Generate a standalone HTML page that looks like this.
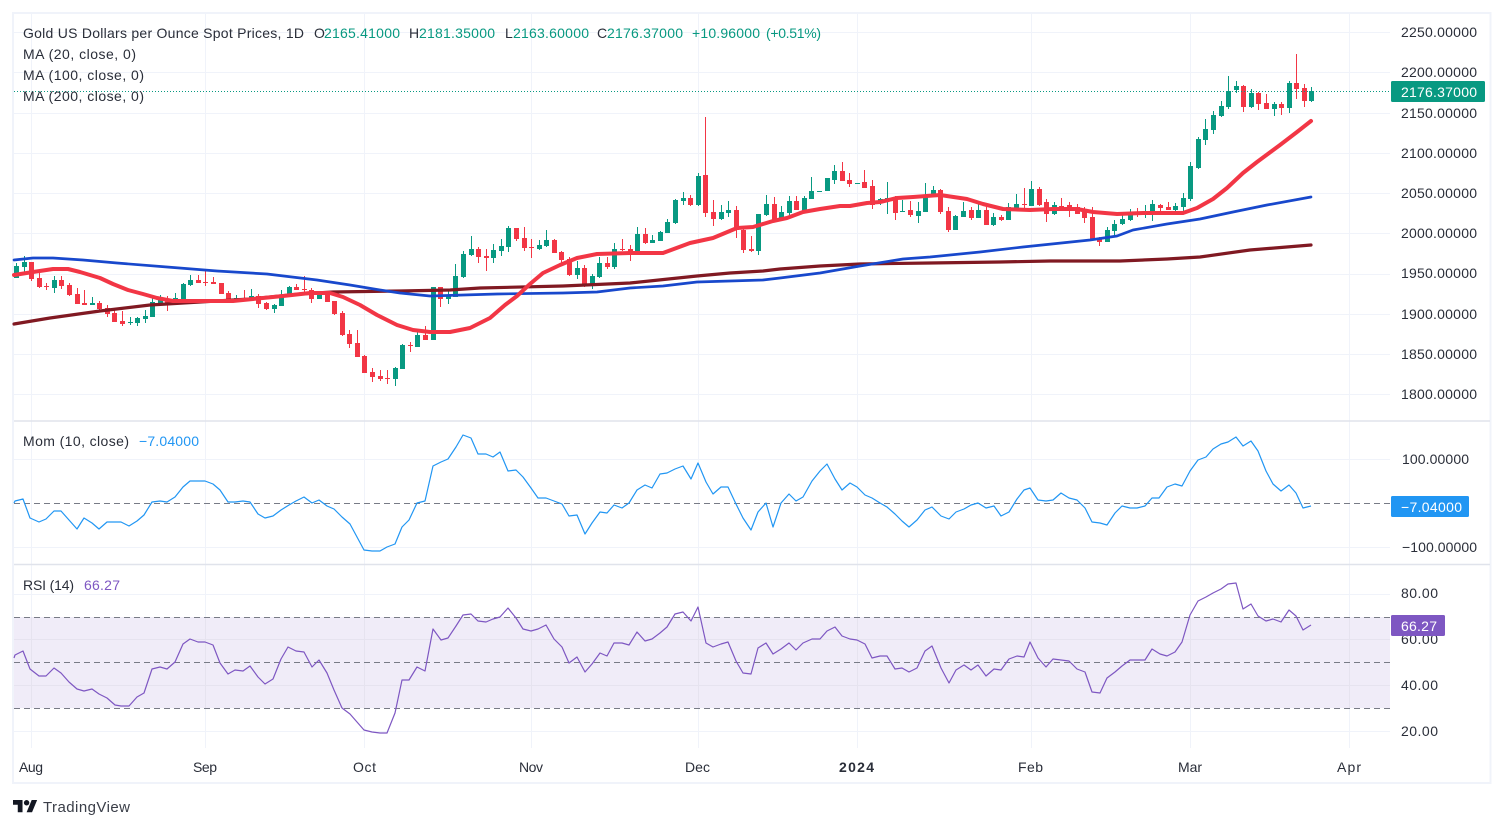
<!DOCTYPE html>
<html lang="en">
<head>
<meta charset="utf-8">
<title>Gold US Dollars per Ounce Spot Prices</title>
<style>
html,body{margin:0;padding:0;background:#fff;width:1504px;height:828px;overflow:hidden}
svg{display:block}
text{font-family:"Liberation Sans","DejaVu Sans",sans-serif;font-size:14px;fill:#2a2e39}
.t{fill:#089981}
.w{fill:#fff}
</style>
</head>
<body>
<svg width="1504" height="828" viewBox="0 0 1504 828" xmlns="http://www.w3.org/2000/svg">
<rect width="1504" height="828" fill="#fff"/>
<!-- RSI band -->
<rect x="14" y="617" width="1376" height="91" fill="#f0ecf8"/>
<!-- grid -->
<g stroke="#f0f3fa" stroke-width="1" fill="none" shape-rendering="crispEdges">
<path d="M14 32.5H1390M14 72.5H1390M14 113.5H1390M14 153.5H1390M14 193.5H1390M14 233.5H1390M14 274.5H1390M14 314.5H1390M14 354.5H1390M14 394.5H1390"/>
<path d="M14 459.5H1390M14 547.5H1390"/>
<path d="M14 594.5H1390M14 731.5H1390"/>
<path d="M31.5 14V748M205.5 14V748M364.5 14V748M531.5 14V748M698.5 14V748M857.5 14V748M1031.5 14V748M1190.5 14V748M1349.5 14V748"/>
</g>
<g stroke="#e6e3ef" stroke-width="1" fill="none" shape-rendering="crispEdges">
<path d="M14 639.5H1390M14 685.5H1390"/>
<path d="M31.5 617V708M205.5 617V708M364.5 617V708M531.5 617V708M698.5 617V708M857.5 617V708M1031.5 617V708M1190.5 617V708M1349.5 617V708"/>
</g>
<!-- frame -->
<rect x="13" y="13" width="1477.5" height="770" fill="none" stroke="#f0f3fa" stroke-width="2"/>
<path d="M14 421H1490M14 564.5H1490" stroke="#e0e3eb" stroke-width="1.5" fill="none"/>
<!-- green candles -->
<path shape-rendering="crispEdges" fill="none" stroke="#089981" stroke-width="1" d="M16.5 263V278M24.5 256V273M54.5 276V293M92.5 297V305M130.5 317V325M137.5 317V326M145.5 310V323M152.5 298V317M160.5 295V305M175.5 293V303M183.5 283V301M190.5 275V286M236.5 295V302M251.5 289V301M274.5 304V313M281.5 290V306M289.5 286V296M319.5 291V299M395.5 367V386M402.5 344V369M417.5 332V347M433.5 287V340M448.5 289V304M455.5 264V297M463.5 251V278M471.5 236V256M493.5 244V263M501.5 239V256M508.5 226V252M539.5 240V250M546.5 230V247M577.5 261V279M592.5 274V289M599.5 257V278M614.5 243V269M637.5 227V254M652.5 235V243M660.5 231V241M667.5 219V233M675.5 199V224M683.5 192V205M698.5 173V206M721.5 205V220M728.5 201V217M758.5 214V255M766.5 195V216M781.5 206V220M789.5 196V215M804.5 196V212M811.5 177V199M827.5 178V191M834.5 165V184M880.5 198V205M887.5 182V214M902.5 200V212M918.5 202V223M925.5 183V212M933.5 186V196M955.5 215V230M963.5 202V217M978.5 204V218M993.5 213V226M1008.5 203V220M1016.5 194V210M1031.5 181V206M1054.5 202V215M1107.5 227V242M1114.5 220V235M1122.5 215V225M1130.5 209V221M1145.5 205V218M1152.5 200V221M1175.5 203V214M1183.5 193V211M1190.5 162V201M1198.5 137V169M1205.5 119V145M1213.5 111V134M1221.5 101V117M1228.5 76V109M1236.5 81V93M1251.5 89V108M1274.5 102V116M1289.5 81V113M1311.5 87V102"/>
<path shape-rendering="crispEdges" fill="none" stroke="#089981" stroke-width="5" d="M16.5 266V278M24.5 262V267M54.5 280V288M92.5 303V305M130.5 322V323M137.5 318V323M145.5 316V319M152.5 302V317M160.5 299V303M175.5 298V303M183.5 284V299M190.5 280V285M236.5 298V302M251.5 296V300M274.5 305V309M281.5 295V306M289.5 287V296M319.5 294V299M395.5 368V379M402.5 345V369M417.5 335V347M433.5 287V340M448.5 295V299M455.5 276V297M463.5 254V277M471.5 249V255M493.5 250V258M501.5 246V251M508.5 228V247M539.5 245V249M546.5 240V246M577.5 268V275M592.5 276V284M599.5 263V277M614.5 249V267M637.5 234V252M652.5 240V243M660.5 232V241M667.5 222V233M675.5 200V223M683.5 198V201M698.5 176V205M721.5 212V219M728.5 210V213M758.5 214V251M766.5 204V215M781.5 212V219M789.5 201V213M804.5 198V211M811.5 191V199M819.5 191V192M827.5 178V191M834.5 171V180M857.5 183V184M880.5 199V202M887.5 198V199M902.5 211V212M918.5 211V216M925.5 195V212M933.5 190V195M955.5 216V230M963.5 211V217M978.5 210V218M993.5 217V225M1008.5 207V220M1016.5 204V209M1031.5 189V206M1054.5 205V214M1107.5 230V242M1114.5 224V231M1122.5 219V224M1130.5 213V220M1145.5 214V215M1152.5 204V215M1175.5 206V210M1183.5 198V207M1190.5 166V199M1198.5 139V168M1205.5 129V140M1213.5 115V130M1221.5 106V116M1228.5 91V107M1236.5 86V90M1251.5 93V107M1274.5 104V109M1289.5 83V108M1311.5 91V101"/>
<!-- red candles -->
<path shape-rendering="crispEdges" fill="none" stroke="#f23645" stroke-width="1" d="M31.5 262V281M39.5 273V288M46.5 283V290M61.5 276V289M69.5 283V296M77.5 288V304M84.5 290V305M99.5 301V312M107.5 305V317M114.5 308V322M122.5 311V326M167.5 296V311M198.5 275V283M205.5 271V286M213.5 277V284M221.5 283V294M228.5 291V301M244.5 290V300M258.5 294V308M266.5 302V310M296.5 284V290M304.5 276V292M311.5 288V303M327.5 292V302M334.5 301V315M342.5 311V336M349.5 330V348M357.5 330V357M364.5 355V373M372.5 368V382M380.5 370V381M387.5 370V384M410.5 342V352M425.5 326V340M440.5 287V307M478.5 247V263M486.5 249V271M516.5 228V241M524.5 227V251M531.5 239V258M554.5 239V253M561.5 251V264M569.5 257V276M584.5 265V287M607.5 257V269M622.5 239V251M630.5 245V261M645.5 228V244M690.5 195V206M705.5 117V217M713.5 200V226M736.5 206V238M743.5 229V253M751.5 236V252M774.5 197V222M796.5 196V210M842.5 162V181M849.5 173V187M864.5 170V188M872.5 180V209M895.5 196V220M910.5 201V217M940.5 189V214M948.5 207V232M971.5 207V220M986.5 207V225M1001.5 215V221M1024.5 188V209M1039.5 187V206M1046.5 199V222M1061.5 198V210M1069.5 202V217M1077.5 204V214M1084.5 207V223M1092.5 207V241M1099.5 237V246M1137.5 208V217M1160.5 204V212M1168.5 202V210M1243.5 85V112M1258.5 92V110M1266.5 94V109M1281.5 102V115M1296.5 54V99M1304.5 84V107"/>
<path shape-rendering="crispEdges" fill="none" stroke="#f23645" stroke-width="5" d="M31.5 262V279M39.5 278V287M46.5 286V287M61.5 280V286M69.5 285V295M77.5 294V304M84.5 303V305M99.5 303V309M107.5 308V314M114.5 313V322M122.5 321V324M167.5 299V303M198.5 280V283M205.5 282V283M213.5 282V284M221.5 283V294M228.5 293V300M244.5 298V299M258.5 296V304M266.5 303V309M296.5 287V290M304.5 289V290M311.5 290V299M327.5 292V302M334.5 301V314M342.5 313V335M349.5 334V344M357.5 343V357M364.5 356V373M372.5 372V377M380.5 376V379M387.5 378V379M410.5 345V346M425.5 335V340M440.5 287V299M478.5 249V257M486.5 256V258M516.5 228V239M524.5 238V248M531.5 247V248M554.5 240V253M561.5 252V260M569.5 259V275M584.5 268V286M607.5 263V267M622.5 249V250M630.5 249V252M645.5 234V243M690.5 198V205M705.5 175V213M713.5 212V219M736.5 210V230M743.5 230V250M751.5 249V251M774.5 204V220M796.5 201V210M842.5 171V181M849.5 180V184M864.5 182V188M872.5 186V205M895.5 197V213M910.5 210V215M940.5 190V212M948.5 211V230M971.5 210V218M986.5 210V225M1001.5 217V220M1024.5 204V205M1039.5 189V205M1046.5 202V214M1061.5 206V207M1069.5 205V210M1077.5 207V214M1084.5 212V218M1092.5 217V240M1099.5 239V242M1137.5 213V214M1160.5 205V208M1168.5 207V210M1243.5 86V107M1258.5 93V104M1266.5 103V109M1281.5 104V108M1296.5 83V89M1304.5 88V101"/>
<!-- MA 200 -->
<polyline fill="none" stroke="#801922" stroke-width="3.2" stroke-linejoin="round" stroke-linecap="round" points="14,324 50,318 100,311 150,305 200,302 250,299 300,294 333,292 400,291 450,290 480,288 563,286 630,283 697,276 730,273 763,271 780,269 820,266 860,264 930,263 1000,262 1050,261 1120,261 1167,259 1200,257 1250,250 1311,245"/>
<!-- MA 100 -->
<polyline fill="none" stroke="#1848cc" stroke-width="2.7" stroke-linejoin="round" stroke-linecap="round" points="14,260 33,258 53,258 83,260 117,263 167,267 217,271 267,274 317,280 350,285 380,290 400,293 430,296 497,294 563,293 597,292 630,288 663,286 697,282 730,281 763,280 780,278 820,273 860,266 903,259 930,257 980,252 1023,247 1090,240 1117,236 1133,230 1167,224 1200,219 1233,212 1267,205 1311,197"/>
<!-- MA 20 -->
<polyline fill="none" stroke="#f23645" stroke-width="4" stroke-linejoin="round" stroke-linecap="round" points="14,275 33,272 53,269 68,269 80,272 100,278 113,284 128,290 143,294 157,298 173,301 200,301 233,301 253,299 283,296 310,293 330,293 343,297 360,305 377,315 397,325 413,330 430,332 450,332 470,328 490,318 505,305 517,296 530,284 543,273 560,265 577,258 597,254 630,253 663,253 690,243 713,238 737,228 753,227 773,221 787,218 803,212 820,209 840,206 850,206 867,203 880,202 897,198 913,197 940,195 967,199 983,204 1003,209 1030,210 1053,209 1077,209 1093,212 1117,214 1143,213 1167,213 1183,213 1197,208 1213,199 1227,188 1243,173 1257,162 1280,145 1297,132 1311,121"/>
<!-- last price line -->
<path d="M14 91.5H1390" stroke="#089981" stroke-width="1" stroke-dasharray="1 2" fill="none" shape-rendering="crispEdges"/>
<!-- Momentum -->
<path d="M14 503.5H1390" stroke="#787b86" stroke-width="1" stroke-dasharray="6 4" fill="none" shape-rendering="crispEdges"/>
<polyline fill="none" stroke="#2196f3" stroke-width="1.2" stroke-linejoin="round" points="14,503 15,501 23,499 30,518 39,522 46,519 54,511 61,511 69,520 77,529 84,518 92,523 99,529 107,522 114,522 121,522 129,526 137,521 144,515 152,502 160,501 167,502 175,497 183,487 190,481 198,481 205,481 213,484 220,490 228,502 235,502 243,501 250,502 258,514 265,518 273,516 281,510 289,505 296,501 304,497 312,503 319,500 327,506 334,509 342,517 350,524 357,537 364,550 372,551 380,551 387,547 395,544 402,527 409,520 417,503 425,501 433,466 441,462 448,459 456,447 463,435 471,438 478,454 486,454 493,457 500,452 508,471 516,470 523,477 531,488 538,498 546,498 554,501 562,504 569,516 577,515 585,534 592,523 600,512 607,513 614,505 622,508 629,503 637,490 645,485 652,488 660,474 667,473 675,469 683,466 691,479 698,463 706,482 713,494 721,487 728,487 736,504 743,518 751,530 758,512 766,503 773,527 781,503 789,494 796,501 803,497 812,481 820,471 827,464 835,479 842,490 850,483 857,487 865,495 872,498 880,503 887,507 895,514 902,521 909,527 917,520 925,510 932,507 941,516 949,519 956,512 964,509 971,505 978,503 986,508 994,506 1001,516 1009,512 1017,499 1024,490 1030,488 1038,500 1046,501 1053,500 1061,493 1069,498 1077,500 1085,508 1092,522 1100,523 1107,525 1115,513 1122,506 1130,508 1137,508 1145,506 1152,498 1159,498 1167,487 1175,484 1182,486 1190,471 1198,460 1206,457 1213,449 1221,444 1228,442 1236,437 1243,446 1251,441 1258,451 1266,471 1273,484 1281,491 1289,485 1296,493 1303,508 1311,506"/>
<!-- RSI -->
<path d="M14 617.5H1390M14 662.5H1390M14 708.5H1390" stroke="#787b86" stroke-width="1" stroke-dasharray="6 4" fill="none" shape-rendering="crispEdges"/>
<polyline fill="none" stroke="#7e57c2" stroke-width="1.2" stroke-linejoin="round" points="14,658 15,655 23,651 30,669 39,676 46,676 54,668 61,673 69,682 77,689 84,691 92,689 99,694 107,698 115,705 121,706 129,706 137,697 144,693 152,669 160,667 167,669 175,662 183,644 190,639 198,642 205,642 213,645 220,663 228,674 235,670 243,671 250,666 258,677 265,684 273,679 281,659 288,647 296,651 304,652 312,667 319,660 327,673 334,690 342,708 350,714 357,722 364,730 372,732 380,733 387,733 395,713 402,680 409,680 417,667 425,671 433,629 441,640 448,638 456,626 463,615 471,614 478,621 486,622 493,619 500,617 508,608 516,618 523,629 531,631 538,629 546,625 554,639 562,647 569,663 577,657 585,672 592,664 600,653 607,656 614,643 622,643 629,645 637,632 645,641 652,639 660,633 667,627 675,614 683,612 691,621 698,607 706,643 713,647 721,644 728,642 736,661 743,673 751,674 758,648 766,643 773,654 781,649 789,643 796,650 803,643 812,639 820,639 827,631 835,627 842,636 850,639 857,640 865,644 872,658 880,656 887,656 895,669 902,668 909,672 917,668 925,651 932,646 941,668 949,683 956,670 964,665 971,670 978,665 986,676 994,669 1001,670 1009,659 1017,656 1024,657 1030,642 1038,658 1046,667 1053,659 1061,660 1069,661 1077,669 1085,672 1092,692 1100,693 1107,678 1115,672 1122,666 1130,660 1137,660 1145,660 1152,649 1160,654 1167,656 1175,652 1182,642 1190,615 1198,601 1206,597 1213,593 1221,589 1228,584 1236,583 1243,609 1251,604 1258,616 1266,621 1273,619 1281,622 1289,610 1296,616 1303,630 1311,625"/>
<!-- legends -->
<text x="23" y="38" textLength="281" lengthAdjust="spacing">Gold US Dollars per Ounce Spot Prices, 1D</text>
<text x="314" y="38">O</text><text class="t" x="324" y="38" textLength="76" lengthAdjust="spacing">2165.41000</text>
<text x="409" y="38">H</text><text class="t" x="419" y="38" textLength="76" lengthAdjust="spacing">2181.35000</text>
<text x="505" y="38">L</text><text class="t" x="513" y="38" textLength="76" lengthAdjust="spacing">2163.60000</text>
<text x="597" y="38">C</text><text class="t" x="607" y="38" textLength="76" lengthAdjust="spacing">2176.37000</text>
<text class="t" x="692" y="38" textLength="68" lengthAdjust="spacing">+10.96000</text>
<text class="t" x="766" y="38" textLength="55" lengthAdjust="spacing">(+0.51%)</text>
<text x="23" y="59" textLength="113" lengthAdjust="spacing">MA (20, close, 0)</text>
<text x="23" y="80" textLength="121" lengthAdjust="spacing">MA (100, close, 0)</text>
<text x="23" y="101" textLength="121" lengthAdjust="spacing">MA (200, close, 0)</text>
<text x="23" y="446" textLength="106" lengthAdjust="spacing">Mom (10, close)</text>
<text x="139" y="446" textLength="60" lengthAdjust="spacing" style="fill:#2196f3">−7.04000</text>
<text x="23" y="590" textLength="51" lengthAdjust="spacing">RSI (14)</text>
<text x="84" y="590" textLength="36" lengthAdjust="spacing" style="fill:#7e57c2">66.27</text>
<!-- price axis -->
<g>
<text x="1401" y="37" textLength="76" lengthAdjust="spacing">2250.00000</text>
<text x="1401" y="77" textLength="76" lengthAdjust="spacing">2200.00000</text>
<text x="1401" y="118" textLength="76" lengthAdjust="spacing">2150.00000</text>
<text x="1401" y="158" textLength="76" lengthAdjust="spacing">2100.00000</text>
<text x="1401" y="198" textLength="76" lengthAdjust="spacing">2050.00000</text>
<text x="1401" y="238" textLength="76" lengthAdjust="spacing">2000.00000</text>
<text x="1401" y="278" textLength="76" lengthAdjust="spacing">1950.00000</text>
<text x="1401" y="319" textLength="76" lengthAdjust="spacing">1900.00000</text>
<text x="1401" y="359" textLength="76" lengthAdjust="spacing">1850.00000</text>
<text x="1401" y="399" textLength="76" lengthAdjust="spacing">1800.00000</text>
<rect x="1391" y="81" width="94" height="21" rx="1.5" fill="#089981"/>
<text class="w" x="1401" y="97" textLength="76" lengthAdjust="spacing">2176.37000</text>
<text x="1402" y="464" textLength="67" lengthAdjust="spacing">100.00000</text>
<text x="1402" y="552" textLength="75" lengthAdjust="spacing">−100.00000</text>
<rect x="1391" y="496" width="78" height="21" rx="1.5" fill="#2196f3"/>
<text class="w" x="1401" y="512" textLength="61" lengthAdjust="spacing">−7.04000</text>
<text x="1401" y="598" textLength="37" lengthAdjust="spacing">80.00</text>
<text x="1401" y="644" textLength="37" lengthAdjust="spacing">60.00</text>
<text x="1401" y="690" textLength="37" lengthAdjust="spacing">40.00</text>
<text x="1401" y="736" textLength="37" lengthAdjust="spacing">20.00</text>
<rect x="1391" y="615" width="54" height="21" rx="1.5" fill="#7e57c2"/>
<text class="w" x="1401" y="631" textLength="36" lengthAdjust="spacing">66.27</text>
</g>
<!-- time axis -->
<g>
<text x="19" y="772" textLength="24" lengthAdjust="spacing">Aug</text>
<text x="193" y="772" textLength="24" lengthAdjust="spacing">Sep</text>
<text x="353" y="772" textLength="23" lengthAdjust="spacing">Oct</text>
<text x="519" y="772" textLength="24" lengthAdjust="spacing">Nov</text>
<text x="685" y="772" textLength="25" lengthAdjust="spacing">Dec</text>
<text x="839" y="772" textLength="35" lengthAdjust="spacing" style="font-weight:700">2024</text>
<text x="1018" y="772" textLength="25" lengthAdjust="spacing">Feb</text>
<text x="1178" y="772" textLength="24" lengthAdjust="spacing">Mar</text>
<text x="1337" y="772" textLength="24" lengthAdjust="spacing">Apr</text>
</g>
<!-- logo -->
<g transform="translate(13 797.3) scale(.68)" fill="#131722">
<path d="M14 22H7V11H0V4h14v18zM28 22h-8l7.5-18h8L28 22z"/>
<circle cx="20" cy="8" r="4"/>
</g>
<text x="43" y="812" textLength="87" lengthAdjust="spacing" style="font-size:15px;fill:#3a3e48">TradingView</text>
</svg>
</body>
</html>
